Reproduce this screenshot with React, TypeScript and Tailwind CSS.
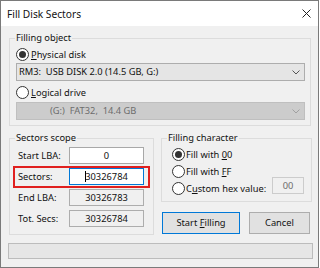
import type { ReactNode } from 'react';

function Radio({ checked }: { checked?: boolean }) {
  return (
    <span className="flex h-[13px] w-[13px] shrink-0 items-center justify-center rounded-full border border-[#333333] bg-white">
      {checked && <span className="h-[7px] w-[7px] rounded-full bg-[#333333]" />}
    </span>
  );
}

function Chevron({ color }: { color: string }) {
  return (
    <svg width="8" height="5" viewBox="0 0 8 5" className="shrink-0">
      <path d="M0.5 0.5 L4 4 L7.5 0.5" fill="none" stroke={color} strokeWidth="1" />
    </svg>
  );
}

function Group({ title, className, children }: { title: string; className: string; children: ReactNode }) {
  return (
    <fieldset className={`border border-[#dcdcdc] ${className}`}>
      <legend className="ml-[5px] px-[1px] leading-[12px]">{title}</legend>
      {children}
    </fieldset>
  );
}

export default function App() {
  const rows = [
    { label: 'Start LBA:', value: '0', kind: 'edit' },
    { label: 'Sectors:', value: '30326784', kind: 'focus' },
    { label: 'End LBA:', value: '30326783', kind: 'readonly' },
    { label: 'Tot. Secs:', value: '30326784', kind: 'readonly' },
  ];

  return (
    <div className="flex h-[268px] w-[319px] flex-col whitespace-nowrap border border-[#7a7a7a] bg-[#f0f0f0] font-['Noto_Sans',sans-serif] text-[9.3px] leading-[12px] text-[#111]">
      <div className="flex h-[25px] shrink-0 items-center justify-between bg-white pl-[6px] pr-[7px]">
        <span className="text-[10.2px]">Fill Disk Sectors</span>
        <svg width="9" height="9" viewBox="0 0 9 9">
          <path d="M0.5 0.5 L8.5 8.5 M8.5 0.5 L0.5 8.5" stroke="#222" strokeWidth="1" />
        </svg>
      </div>

      <div className="flex flex-col pl-[8px] pt-[6px]">
        <Group title="Filling object" className="w-[302px]">
          <div className="flex flex-col pb-[5px] pl-[6px] pr-[5px] pt-[4px]">
            <div className="flex h-[13px] items-center gap-[2px]">
              <Radio checked />
              <span><u>P</u>hysical disk</span>
            </div>
            <div className="mt-[2px] flex h-[18px] items-center justify-between border border-[#adadad] bg-[#e5e5e5] pl-[2px] pr-[4px]">
              <span className="whitespace-pre">RM3:  USB DISK 2.0 (14.5 GB, G:)</span>
              <Chevron color="#555555" />
            </div>
            <div className="mt-[5px] flex h-[13px] items-center gap-[2px]">
              <Radio />
              <span><u>L</u>ogical drive</span>
            </div>
            <div className="mt-[3px] flex h-[18px] items-center justify-between border border-[#bfbfbf] bg-[#cccccc] pl-[33px] pr-[4px] text-[#6d6d6d]">
              <span className="whitespace-pre">(G:)  FAT32,  14.4 GB</span>
              <Chevron color="#a0a0a0" />
            </div>
          </div>
        </Group>

        <div className="mt-[6px] flex gap-[7px]">
          <Group title="Sectors scope" className="w-[145px]">
            <div className="flex flex-col gap-[4px] pb-[7px] pl-[8px] pr-[9px] pt-[3px]">
              {rows.map((row) => (
                <div key={row.label} className="relative flex h-[17px] items-center justify-between">
                  <span>{row.label}</span>
                  <div
                    className={
                      row.kind === 'edit'
                        ? 'flex h-[17px] w-[75px] items-center justify-center border border-[#a8a8a8] bg-white'
                        : row.kind === 'focus'
                          ? 'flex h-[17px] w-[75px] items-center justify-center border border-[#0078d7] bg-white'
                          : 'flex h-[17px] w-[75px] items-center justify-center border border-[#adadad] bg-[#f0f0f0]'
                    }
                  >
                    {row.kind === 'focus' && <span className="mr-[-1px] h-[11px] w-px bg-black" />}
                    <span>{row.value}</span>
                  </div>
                  {row.kind === 'focus' && (
                    <div className="pointer-events-none absolute -bottom-[3px] -left-[5px] -right-[6px] -top-[2px] border-2 border-[#e0201f]" />
                  )}
                </div>
              ))}
            </div>
          </Group>

          <div className="flex w-[151px] flex-col">
            <Group title="Filling character" className="w-[151px]">
              <div className="flex flex-col gap-[4px] pb-[6px] pl-[10px] pr-[7px] pt-[4px]">
                <div className="flex h-[13px] items-center gap-[1px]">
                  <Radio checked />
                  <span>Fill with <u>0</u>0</span>
                </div>
                <div className="flex h-[13px] items-center gap-[1px]">
                  <Radio />
                  <span>Fill with <u>F</u>F</span>
                </div>
                <div className="flex h-[13px] items-center">
                  <div className="flex items-center gap-[1px]">
                    <Radio />
                    <span>C<u>u</u>stom hex value:</span>
                  </div>
                  <div className="-mt-[5px] ml-auto flex h-[17px] w-[32px] items-center justify-center self-start border border-[#cccccc] bg-[#f0f0f0] text-[#6d6d6d]">
                    00
                  </div>
                </div>
              </div>
            </Group>
            <div className="mt-[10px] flex gap-[9px] pl-[1px]">
              <button className="flex h-[22px] w-[78px] items-center justify-center border border-[#0078d7] bg-[#e1e1e1]">
                <span>Start <u>F</u>illing</span>
              </button>
              <button className="flex h-[22px] w-[61px] items-center justify-center border border-[#adadad] bg-[#e1e1e1]">
                Cancel
              </button>
            </div>
          </div>
        </div>

        <div className="-ml-px mt-[8px] h-[16px] w-[305px] border border-[#bcbcbc] bg-[#e6e6e6]" />
      </div>
    </div>
  );
}
